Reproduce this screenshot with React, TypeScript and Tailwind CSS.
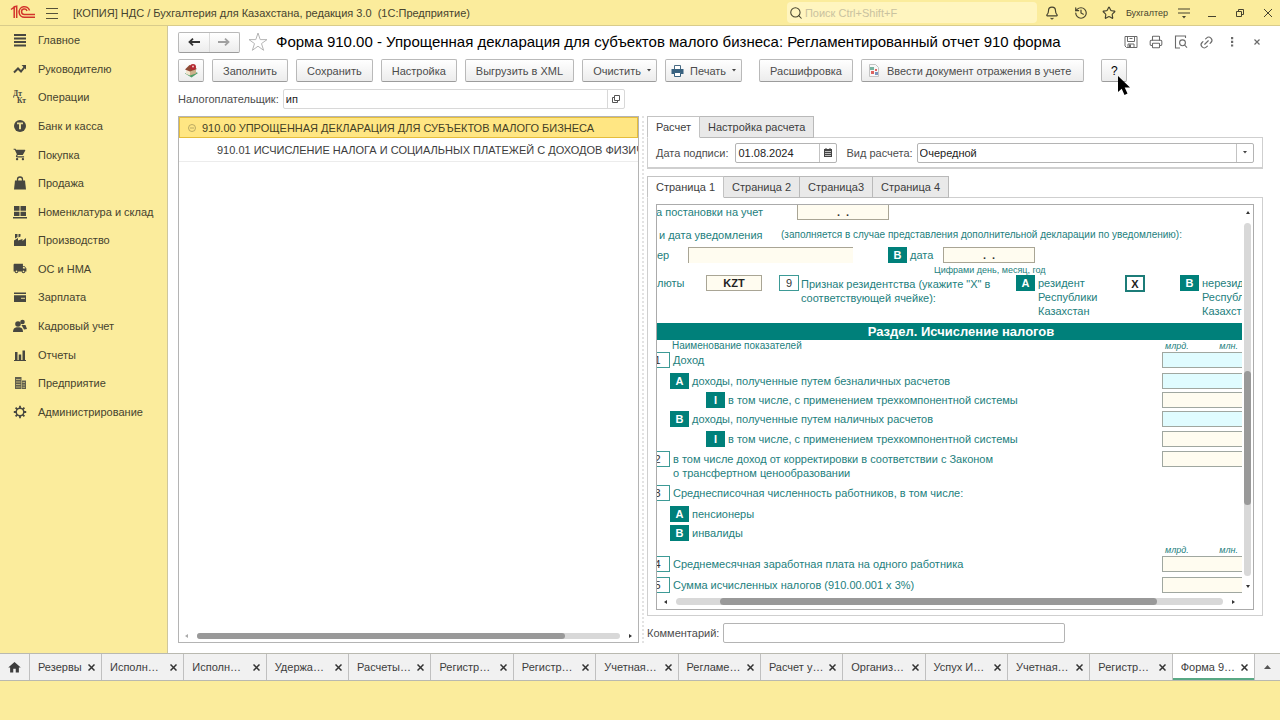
import React from 'react';
import { Bell, History, Star, Search, Printer, Link2 } from 'lucide-react';
import { MdShoppingCart, MdLocalShipping, MdHome } from 'react-icons/md';

const svgProps = { width: 14, height: 14, viewBox: '0 0 14 14', fill: 'currentColor' };

const MainIcon = () => (
  <svg {...svgProps}>
    <path d="M1 1h12v2H1zM1 4.5h12v2H1zM1 8h12v2H1zM1 11.5h12v2H1z" />
  </svg>
);

const TrendIcon = () => (
  <svg {...svgProps} fill="none" stroke="currentColor" strokeWidth="2">
    <path d="M1 10.5 5 6.5l3 3L12 4.5" />
    <path d="M8.5 3H13v4.5" fill="currentColor" stroke="none" />
  </svg>
);

const OperationsIcon = () => (
  <svg {...svgProps} fontFamily="Liberation Serif, serif" fontWeight="bold" fontSize="7.5">
    <text x="0" y="6">Дт</text>
    <text x="4" y="13">Кт</text>
  </svg>
);

const CoinIcon = () => (
  <svg {...svgProps}>
    <circle cx="7" cy="7" r="6" />
    <path d="M4 3.5h6v1.8H8v5H6v-5H4z" fill="#e9dc94" />
  </svg>
);

const BagIcon = () => (
  <svg {...svgProps}>
    <path d="M2 4.5h10l1 9H1z" />
    <path d="M4.5 6V3.5a2.5 2.5 0 0 1 5 0V6" fill="none" stroke="currentColor" strokeWidth="1.3" />
  </svg>
);

const StockIcon = () => (
  <svg {...svgProps}>
    <path d="M1 1h5.5v4.7H1zM7.5 1H13v4.7H7.5zM1 6.7h5.5V11H1zM7.5 6.7H13V11H7.5zM0 12h14v1.5H0z" />
  </svg>
);

const FactoryIcon = () => (
  <svg {...svgProps}>
    <path d="M1 13V7.5L5 5v2.5L9.5 6v2L13 5v8zM2 1h2.5v3L2 5.5zM5.5 1h2v2.5l-2 1z" />
  </svg>
);

const WalletIcon = () => (
  <svg {...svgProps}>
    <path d="M1 2.5h12V4H1zM1 5.3h12V12H1z" />
    <path d="M8 8.3h4" stroke="#e9dc94" strokeWidth="1" />
  </svg>
);

const PeopleIcon = () => (
  <svg {...svgProps}>
    <circle cx="9.5" cy="3" r="2.3" />
    <path d="M8.5 6h4l1.5 4-3 .5z" />
    <circle cx="5" cy="5" r="2.8" />
    <path d="M0 13c0-3 1.5-4.5 3.5-4.7h3C8.8 8.500 10 10 10 13z" />
  </svg>
);

const ChartIcon = () => (
  <svg {...svgProps}>
    <path d="M2 4h2.5v8H2zM5.7 6.5h2.5V12H5.7zM9.5 2.500H12V12H9.5zM1 12h12v1H1z" />
  </svg>
);

const BuildingIcon = () => (
  <svg {...svgProps} opacity=".85">
    <path d="M2 1h6.5v12H2zM9 4.5h4V13H9z" />
    <path d="M3 3.5h4.5M3 6h4.5M3 8.5h4.5M3 11h4.5M9.5 6.5H12M9.5 9H12M9.5 11.3H12" stroke="#c9bd7c" strokeWidth=".8" />
  </svg>
);

const GearIcon = () => (
  <svg {...svgProps} fill="none" stroke="currentColor">
    <circle cx="7" cy="7" r="3.8" strokeWidth="1.5" />
    <path d="M7 .8v2.4M7 10.800v2.4M.8 7h2.4M10.800 7h2.4M2.600 2.600l1.700 1.700M9.700 9.700l1.700 1.700M11.400 2.600 9.700 4.300M4.300 9.700l-1.700 1.700" strokeWidth="1.800" />
  </svg>
);

const sections = [
  { name: 'Главное', icon: <MainIcon /> },
  { name: 'Руководителю', icon: <TrendIcon /> },
  { name: 'Операции', icon: <OperationsIcon /> },
  { name: 'Банк и касса', icon: <CoinIcon /> },
  { name: 'Покупка', icon: <MdShoppingCart size={15} /> },
  { name: 'Продажа', icon: <BagIcon /> },
  { name: 'Номенклатура и склад', icon: <StockIcon /> },
  { name: 'Производство', icon: <FactoryIcon /> },
  { name: 'ОС и НМА', icon: <MdLocalShipping size={15} /> },
  { name: 'Зарплата', icon: <WalletIcon /> },
  { name: 'Кадровый учет', icon: <PeopleIcon /> },
  { name: 'Отчеты', icon: <ChartIcon /> },
  { name: 'Предприятие', icon: <BuildingIcon /> },
  { name: 'Администрирование', icon: <GearIcon /> },
];

const windows = [
  'Исполн…', 'Исполн…', 'Удержа…', 'Расчеты…', 'Регистр…', 'Регистр…', 'Учетная…',
  'Регламе…', 'Расчет у…', 'Организ…', 'Успух И…', 'Учетная…', 'Регистр…', 'Форма 9…',
];

function Logo() {
  return (
    <svg width="26" height="15" viewBox="0 0 26 15" fill="none" stroke="#d3342b" strokeWidth="1.5">
      <path d="M1 4.5 4.200 2.200V13M3.5 2 6.700 1.200V13" />
      <path d="M19.500 5.500A5.300 5.300 0 1 0 14.500 12.300H25" />
      <path d="M17 5.900A2.800 2.800 0 1 0 14.500 9.600H25" />
    </svg>
  );
}

function TitleBar() {
  return (
    <header className="flex h-[26px] items-center border-b border-[#d9cc8b] pl-2.5 text-[#46432f]">
      <Logo />
      <button aria-label="Меню" className="ml-2.5 flex">
        <svg width="12" height="12" viewBox="0 0 12 12" stroke="#55513a">
          <path d="M0 1.5h12M0 6.5h12M0 11.5h12" />
        </svg>
      </button>
      <span className="ml-[15px] whitespace-pre">[КОПИЯ] НДС / Бухгалтерия для Казахстана, редакция 3.0  (1С:Предприятие)</span>
      <label className="ml-auto flex h-[21px] w-[250px] items-center gap-0.5 rounded-sm bg-[#fff5bf] pl-0.5">
        <Search size={14} strokeWidth={1.8} />
        <input placeholder="Поиск Ctrl+Shift+F" className="min-w-0 flex-1 bg-transparent outline-none placeholder:text-[#c9c2a0]" />
      </label>
      <button aria-label="Уведомления" className="ml-2 flex w-[15px] justify-center"><Bell size={14} strokeWidth={2} /></button>
      <button aria-label="История" className="ml-3.5 flex"><History size={14} strokeWidth={2} /></button>
      <button aria-label="Избранное" className="ml-3.5 flex"><Star size={14} strokeWidth={2} /></button>
      <span className="ml-2.5 text-[9px]">Бухгалтер</span>
      <button aria-label="Настройки" className="ml-2.5 flex">
        <svg width="12" height="12" viewBox="0 0 12 12" stroke="#46432f" strokeWidth="1.2">
          <path d="M0 2h12M0 6h12" />
          <path d="M4 9h4l-2 2.500z" fill="#46432f" stroke="none" />
        </svg>
      </button>
      <button aria-label="Свернуть" className="ml-[18px] flex">
        <svg width="8" height="10" viewBox="0 0 8 10" stroke="#46432f"><path d="M0 8.500h8" /></svg>
      </button>
      <button aria-label="Развернуть" className="ml-5 flex">
        <svg width="8" height="8" viewBox="0 0 8 8" fill="none" stroke="#46432f">
          <path d="M.5 2.500h5v5h-5zM2.500 2.500v-2h5v5h-2" />
        </svg>
      </button>
      <button aria-label="Закрыть" className="ml-5 mr-2 flex">
        <svg width="8" height="8" viewBox="0 0 8 8" stroke="#46432f"><path d="M0 0l8 8M8 0 0 8" /></svg>
      </button>
    </header>
  );
}

function Sidebar() {
  return (
    <nav className="w-[168px] shrink-0 border-r border-[#cfc79c]">
      <ul className="grid h-[400px] auto-rows-fr">
        {sections.map((s) => (
          <li key={s.name} className="flex">
            <a href="#" className="flex flex-1 items-center gap-[11px] pl-[13px] text-[#46432f]">
              <span className="flex w-3.5 justify-center text-[#474740]">{s.icon}</span>
              {s.name}
            </a>
          </li>
        ))}
      </ul>
    </nav>
  );
}

function ToolButton({ children, className = 'px-2.5', ...rest }: React.ComponentProps<'button'>) {
  return (
    <button
      className={`flex h-[23px] items-center justify-center rounded-xs border border-[#b9b9b9] border-b-[#9c9c9c] bg-linear-to-b from-white to-[#ececec] whitespace-nowrap text-[#4c4c4c] ${className}`}
      {...rest}
    >
      {children}
    </button>
  );
}

const Caret = () => (
  <svg width="4" height="3" viewBox="0 0 4 3" fill="#444"><path d="M0 0h4L2 2.500z" /></svg>
);

function FormHeader() {
  return (
    <div className="flex h-5 items-center">
      <div className="flex h-[21px] w-[62px] rounded-xs border border-[#b9b9b9] border-b-[#9c9c9c] bg-linear-to-b from-white to-[#ececec]">
        <button aria-label="Назад" className="flex flex-1 items-center justify-center border-r border-[#dcdcdc]">
          <svg width="12" height="8" viewBox="0 0 12 8" fill="none" stroke="#333" strokeWidth="1.8"><path d="M12 4H1.500M5 .7 1.500 4 5 7.300" /></svg>
        </button>
        <button aria-label="Вперед" className="flex flex-1 items-center justify-center">
          <svg width="12" height="8" viewBox="0 0 12 8" fill="none" stroke="#a0a0a0" strokeWidth="1.8"><path d="M0 4h10.500M7 .7 10.500 4 7 7.300" /></svg>
        </button>
      </div>
      <button aria-label="В избранное" className="ml-2 flex">
        <svg width="20" height="20" viewBox="0 0 20 20" fill="none" stroke="#b5b5b5">
          <path d="m10 1 2.200 6.600H19l-5.500 4 2.100 6.700L10 14.200l-5.600 4.100 2.100-6.700L1 7.600h6.800z" />
        </svg>
      </button>
      <h1 className="ml-2 text-[15px] leading-5 whitespace-nowrap text-black">
        Форма 910.00 - Упрощенная декларация для субъектов малого бизнеса: Регламентированный отчет 910 форма
      </h1>
      <div className="-mr-px ml-auto flex items-center gap-[11px] text-[#6a6a6a]">
        <button aria-label="Сохранить" className="flex">
          <svg width="14" height="14" viewBox="0 0 14 14" fill="none" stroke="currentColor">
            <path d="M1 1.500h12v11H2.500L1 11z" />
            <path d="M3.500 1.500v5h7v-5M5.500 3.500h3M4 12.500v-3.500h6v3.500" />
            <path d="M5 9.500h2v3H5z" fill="currentColor" stroke="none" />
          </svg>
        </button>
        <button aria-label="Печать" className="flex"><Printer size={14} strokeWidth={1.8} /></button>
        <button aria-label="Просмотр" className="flex">
          <svg width="14" height="14" viewBox="0 0 14 14" fill="none" stroke="currentColor" strokeWidth="1.100">
            <path d="M6 13H1.500V1h10v2" />
            <circle cx="8.500" cy="7.800" r="2.900" />
            <path d="m10.600 10 2.400 2.700" />
          </svg>
        </button>
        <button aria-label="Ссылка" className="flex"><Link2 size={15} strokeWidth={1.8} className="-rotate-45" /></button>
        <button aria-label="Еще" className="flex w-3.5 justify-center">
          <svg width="3" height="10" viewBox="0 0 3 10" fill="currentColor"><path d="M0 0h2.200v2.200H0zM0 3.700h2.200v2.200H0zM0 7.400h2.200v2.200H0z" /></svg>
        </button>
        <button aria-label="Закрыть форму" className="flex w-3.5 justify-center">
          <svg width="6" height="6" viewBox="0 0 6 6" stroke="currentColor" strokeWidth="1.200"><path d="M.5.500l5 5M5.500.500l-5 5" /></svg>
        </button>
      </div>
    </div>
  );
}

function Toolbar() {
  return (
    <div className="mt-[7px] flex gap-2">
      <ToolButton className="w-[26px]" aria-label="Обновить">
        <svg width="15" height="15" viewBox="0 0 15 15">
          <path d="m1 10.500 6-3 7 2.500-6.500 4.500z" fill="#4f9d68" />
          <path d="M2 6.500 6 8v4.500L2 11z" fill="#f1e5cf" />
          <path d="m6 8 6-2v4.500L6 12.500z" fill="#cdb28d" />
          <path d="M1 6.500 5.500 2l3 1L13 6 6 8.500z" fill="#8f4a35" />
          <circle cx="9" cy="4" r="3" fill="#b52a33" />
          <circle cx="9" cy="3.600" r="1" fill="#f0c8c4" />
        </svg>
      </ToolButton>
      <ToolButton>Заполнить</ToolButton>
      <ToolButton>Сохранить</ToolButton>
      <ToolButton>Настройка</ToolButton>
      <ToolButton>Выгрузить в XML</ToolButton>
      <ToolButton className="gap-1.5 pr-[5px] pl-2.5">Очистить <Caret /></ToolButton>
      <ToolButton className="gap-1.5 px-[5px]">
        <svg width="13" height="12" viewBox="0 0 13 12">
          <path d="M3.500.500h6v4h-6z" fill="#fff" stroke="#496a83" />
          <path d="M.5 4h12v5h-12z" fill="#38617f" />
          <path d="M3.500 7.500h6v4h-6z" fill="#fff" stroke="#38617f" />
        </svg>
        Печать <Caret />
      </ToolButton>
      <ToolButton className="ml-[9px] px-2.5">Расшифровка</ToolButton>
      <ToolButton className="gap-2 pr-3 pl-[7px]">
        <svg width="10" height="13" viewBox="0 0 10 13">
          <path d="M.5.500h6l3 3v9h-9z" fill="#f8f8f8" stroke="#c3c3c3" />
          <path d="M1 3h4v3H1z" fill="#78b3a0" />
          <path d="M2 7h3v3H2zM6 5h2v2H6z" fill="#dc6260" />
          <path d="M6 8h3v3H6z" fill="#7b94bd" />
        </svg>
        Ввести документ отражения в учете
      </ToolButton>
      <div className="relative ml-[9px]">
        <ToolButton className="w-[26px] border-[#8e8e8e] text-xs text-black">?</ToolButton>
        <svg className="absolute top-[17px] left-[17px]" width="13" height="20" viewBox="0 0 13 20">
          <path d="M0 0v16l3.700-3.300L6.500 19l3-1.400L6.700 11.500H12z" fill="#000" />
        </svg>
      </div>
    </div>
  );
}

function ReportTree() {
  return (
    <div className="flex flex-col overflow-hidden border border-[#b4b4b4] text-[#3d3d3d]">
      <ul>
        <li className="flex h-[21px] items-center gap-1.5 border border-[#e5bd3b] bg-[#ffe683] pl-2 whitespace-nowrap text-[#443f25]">
          <svg width="8" height="8" viewBox="0 0 8 8" fill="none" stroke="#a89a5a" strokeWidth=".8">
            <circle cx="4" cy="4" r="3.500" />
            <path d="M2 4h4" />
          </svg>
          910.00 УПРОЩЕННАЯ ДЕКЛАРАЦИЯ ДЛЯ СУБЪЕКТОВ МАЛОГО БИЗНЕСА
        </li>
        <li className="flex h-6 items-center border-b border-[#ececec] pl-[38px] whitespace-nowrap">
          910.01 ИСЧИСЛЕНИЕ НАЛОГА И СОЦИАЛЬНЫХ ПЛАТЕЖЕЙ С ДОХОДОВ ФИЗИЧ
        </li>
      </ul>
      <div className="mt-auto flex h-3 items-center gap-2 px-1.5">
        <svg width="4" height="4" viewBox="0 0 4 4" fill="#aaa"><path d="M3 0v4L0 2z" /></svg>
        <div className="h-1.5 flex-1 rounded-full bg-[#d8d8d8]">
          <div className="h-1.5 w-[87%] rounded-full bg-[#999]" />
        </div>
        <svg width="4" height="4" viewBox="0 0 4 4" fill="#333"><path d="M1 0v4l3-2z" /></svg>
      </div>
    </div>
  );
}

function Tabs({ names }: { names: string[] }) {
  return (
    <div role="tablist" className="relative z-10 -mb-px flex">
      {names.map((name, i) => (
        <button
          key={name}
          role="tab"
          aria-selected={i === 0}
          className={
            i === 0
              ? 'h-[22px] border border-[#c3c3c3] border-b-white bg-white px-2 text-[#3d3d3d]'
              : 'h-[22px] border border-l-0 border-[#b9b9b9] bg-[#e9e9e9] px-2 text-[#3d3d3d]'
          }
        >
          {name}
        </button>
      ))}
    </div>
  );
}

const Letter = ({ children }: { children: string }) => (
  <span className="flex h-4 w-[19px] shrink-0 items-center justify-center bg-[#00807a] font-bold text-white">{children}</span>
);

// scrolled half out of view on the left
const RowNumber = ({ n }: { n: string }) => (
  <span className="-ml-3 flex h-4 w-[25px] shrink-0 items-center justify-center border border-[#3d9a96] text-[#333]">{n}</span>
);

const Units = () => (
  <span className="ml-auto flex w-20 justify-between pr-1 pl-[3px] text-[9px] italic">
    <span>млрд.</span>
    <span>млн.</span>
  </span>
);

const cream = 'bg-[#fffcf0]';
const cyan = 'bg-[#e0fcff]';

const indicators = [
  { mark: <RowNumber n="1" />, text: 'Доход', fill: cyan, indent: 'pl-0' },
  { mark: <Letter>A</Letter>, text: 'доходы, полученные путем безналичных расчетов', fill: cyan, indent: 'mt-[5px] pl-[13px]' },
  { mark: <Letter>I</Letter>, text: 'в том числе, с применением трехкомпонентной системы', fill: cream, indent: 'mt-[3px] pl-[49px]' },
  { mark: <Letter>B</Letter>, text: 'доходы, полученные путем наличных расчетов', fill: cyan, indent: 'mt-[3px] pl-[13px]' },
  { mark: <Letter>I</Letter>, text: 'в том числе, с применением трехкомпонентной системы', fill: cream, indent: 'mt-[4px] pl-[49px]' },
  { mark: <RowNumber n="2" />, text: 'в том числе доход от корректировки в соответствии с Законом\nо трансфертном ценообразовании', fill: cream, indent: 'mt-[4px] pl-0' },
  { mark: <RowNumber n="3" />, text: 'Среднесписочная численность работников, в том числе:', indent: 'mt-[5px] pl-0' },
  { mark: <Letter>A</Letter>, text: 'пенсионеры', indent: 'mt-[5px] pl-[13px]' },
  { mark: <Letter>B</Letter>, text: 'инвалиды', indent: 'mt-[3px] pl-[13px]' },
  { mark: <RowNumber n="4" />, text: 'Среднемесячная заработная плата на одного работника', fill: cream, indent: 'pl-0', units: true },
  { mark: <RowNumber n="5" />, text: 'Сумма исчисленных налогов (910.00.001 x 3%)', fill: cream, indent: 'mt-[5px] pl-0' },
];

function Sheet() {
  return (
    <div className="min-w-0 flex-1 overflow-hidden text-[#23807d]">
      <div className="flex h-[15px] leading-[14px]">
        <span className="-ml-px w-[141px] shrink-0 whitespace-nowrap">а постановки на учет</span>
        <input aria-label="Дата постановки на учет" defaultValue=".  ." className="w-[92px] border border-t-0 border-[#a9a595] bg-[#fffcf0] text-center font-bold whitespace-pre text-[#333]" />
      </div>
      <div className="mt-[7px] flex h-4 items-center whitespace-nowrap">
        <span className="w-[124px] shrink-0 pl-0.5">и дата уведомления</span>
        <span className="text-[10px]">(заполняется в случае представления дополнительной декларации по уведомлению):</span>
      </div>
      <div className="mt-1 flex h-4 items-center">
        <span className="w-[31px]">ер</span>
        <input aria-label="номер" className="h-4 w-[165px] border-t border-l border-[#a9a595] bg-[#fffcf0]" />
        <span className="ml-[35px] flex w-[55px] items-center gap-[3px]"><Letter>B</Letter> дата</span>
        <input aria-label="дата" defaultValue=".  ." className="h-4 w-[92px] border border-[#a9a595] bg-[#fffcf0] text-center font-bold whitespace-pre text-[#333]" />
      </div>
      <p className="mt-px h-3 pl-[277px] text-[9px] leading-3 whitespace-nowrap">Цифрами день, месяц, год</p>
      <div className="-mt-px flex h-12 items-start leading-[14px] whitespace-nowrap">
        <span className="w-[49px] shrink-0 pt-px">люты</span>
        <input aria-label="Код валюты" defaultValue="KZT" className="h-4 w-[56px] shrink-0 border border-[#a9a595] bg-[#fffcf0] text-center font-bold text-[#222]" />
        <span className="ml-[17px] flex h-4 w-5 shrink-0 items-center justify-center border border-[#3d9a96] text-[#333]">9</span>
        <span className="w-[217px] shrink-0 pt-0.5 pl-0.5">Признак резидентства (укажите "X" в<br />соответствующей ячейке):</span>
        <Letter>A</Letter>
        <span className="w-[90px] shrink-0 pt-px pl-[3px]">резидент<br />Республики<br />Казахстан</span>
        <input aria-label="резидент" defaultValue="X" className="h-[17px] w-5 shrink-0 border-2 border-[#1c7c78] bg-white text-center font-bold text-[#222]" />
        <span className="ml-[35px] flex"><Letter>B</Letter></span>
        <span className="pt-px pl-[3px]">нерезид<br />Республ<br />Казахст</span>
      </div>
      <h2 className="h-[17px] bg-[#00807a] pl-[23px] text-center text-[13px] leading-[17px] font-bold text-white">Раздел. Исчисление налогов</h2>
      <div className="flex h-3 items-center pl-[15px]">
        <span className="text-[10px]">Наименование показателей</span>
        <Units />
      </div>
      {indicators.map((row, i) => (
        <React.Fragment key={i}>
          {row.units && <div className="mt-[3px] flex h-3 items-center"><Units /></div>}
          <div className={`flex items-start ${row.indent}`}>
            {row.mark}
            <span className="pt-px pl-[3px] leading-[14px] whitespace-pre-line">{row.text}</span>
            {row.fill && <input aria-label={row.text} className={`ml-auto h-4 w-20 shrink-0 border border-r-0 border-[#a0a7a0] ${row.fill}`} />}
          </div>
        </React.Fragment>
      ))}
    </div>
  );
}

function SheetFrame() {
  return (
    <div className="flex flex-1 flex-col border border-[#ababab]">
      <div className="flex flex-1">
        <Sheet />
        <div className="flex w-[11px] shrink-0 flex-col items-center gap-2 py-1.5">
          <svg width="4" height="4" viewBox="0 0 4 4" fill="#333"><path d="M0 3h4L2 0z" /></svg>
          <div className="flex w-[7px] flex-1 flex-col rounded-full bg-[#d8d8d8]">
            <div className="grow-[42]" />
            <div className="grow-[38] rounded-full bg-[#999]" />
            <div className="grow-[20]" />
          </div>
          <svg width="4" height="4" viewBox="0 0 4 4" fill="#333"><path d="M0 1h4L2 4z" /></svg>
        </div>
      </div>
      <div className="flex h-[15px] items-center gap-2 pr-[18px] pl-[7px]">
        <svg width="4" height="4" viewBox="0 0 4 4" fill="#333"><path d="M3 0v4L0 2z" /></svg>
        <div className="h-[7px] flex-1 rounded-full bg-[#d8d8d8]">
          <div className="ml-[8%] h-[7px] w-4/5 rounded-full bg-[#999]" />
        </div>
        <svg width="4" height="4" viewBox="0 0 4 4" fill="#333"><path d="M1 0v4l3-2z" /></svg>
      </div>
    </div>
  );
}

function ReportPanel() {
  return (
    <div className="flex min-w-0 flex-col text-[#4c4c4c]">
      <Tabs names={['Расчет', 'Настройка расчета']} />
      <div className="flex h-8 items-center border border-b-2 border-[#cfcfcf] px-2">
        <label htmlFor="sign-date">Дата подписи:</label>
        <div className="ml-[7px] flex h-5 w-[102px] rounded-xs border border-[#b4b4b4]">
          <input id="sign-date" defaultValue="01.08.2024" className="w-0 flex-1 pl-0.5 text-[#222] outline-none" />
          <button aria-label="Календарь" className="flex w-[17px] items-center justify-center border-l border-[#c3c3c3]">
            <svg width="8" height="9" viewBox="0 0 8 9">
              <path d="M0 1h8v8H0zM1.500 0h1v1h-1zM5.500 0h1v1h-1z" fill="#444" />
              <path d="M1 3.500h6M1 5.500h6M1 7.500h6" stroke="#ddd" strokeWidth=".8" />
            </svg>
          </button>
        </div>
        <label htmlFor="calc-kind" className="ml-[9px]">Вид расчета:</label>
        <div className="ml-1 flex h-5 flex-1 rounded-xs border border-[#b4b4b4]">
          <select id="calc-kind" className="flex-1 appearance-none pl-0.5 text-[#222] outline-none">
            <option>Очередной</option>
          </select>
          <span className="flex w-[17px] items-center justify-center border-l border-[#c3c3c3]"><Caret /></span>
        </div>
      </div>
      <div className="mt-[7px] flex flex-1 flex-col">
        <Tabs names={['Страница 1', 'Страница 2', 'Страница3', 'Страница 4']} />
        <div className="flex flex-1 flex-col border border-[#cfcfcf] px-2 pt-1.5 pb-[5px]">
          <SheetFrame />
        </div>
      </div>
      <div className="mt-[7px] flex h-5 items-center gap-1">
        <label htmlFor="comment">Комментарий:</label>
        <input id="comment" className="h-5 w-[342px] rounded-xs border border-[#b4b4b4] px-1" />
      </div>
    </div>
  );
}

function WindowTab({ name, active }: { name: string; active?: boolean }) {
  return (
    <div className={`flex min-w-0 flex-1 items-center justify-between border-r border-[#c0c0c0] pr-1.5 pl-2 ${active ? 'bg-white shadow-[inset_0_-2px_#58a884]' : ''}`}>
      <button className="whitespace-nowrap">{name}</button>
      <button aria-label="Закрыть окно" className="flex">
        <svg width="7" height="7" viewBox="0 0 7 7" stroke="#333" strokeWidth="1.500"><path d="m.5.500 6 6M6.500.500l-6 6" /></svg>
      </button>
    </div>
  );
}

function WindowBar() {
  return (
    <footer className="mb-[39px] flex h-7 border-y border-[#b9b9b0] bg-[#f1f1f1] text-[#3d3d3d]">
      <button aria-label="Начальная страница" className="flex w-[30px] items-center justify-center border-r border-[#c0c0c0]">
        <MdHome size={15} />
      </button>
      <div className="flex w-[72px]"><WindowTab name="Резервы" /></div>
      {windows.map((name, i) => (
        <WindowTab key={i} name={name} active={i === windows.length - 1} />
      ))}
      <button aria-label="Все окна" className="flex w-[25px] items-center justify-center">
        <svg width="7" height="4" viewBox="0 0 7 4" fill="#555"><path d="M0 4h7L3.500 0z" /></svg>
      </button>
    </footer>
  );
}

export default function App() {
  return (
    <div className="flex min-h-screen flex-col bg-[#fbec9c] font-['Liberation_Sans',Arial,sans-serif] text-[11px] leading-4">
      <TitleBar />
      <div className="flex flex-1">
        <Sidebar />
        <main className="flex min-w-0 flex-1 flex-col bg-white pt-1.5 pr-[17px] pb-2.5 pl-2.5">
          <FormHeader />
          <Toolbar />
          <div className="mt-[7px] flex h-5 items-center text-[#4c4c4c]">
            <label htmlFor="payer">Налогоплательщик:</label>
            <div className="ml-1 flex h-5 w-[342px] rounded-xs border border-[#d8d8d8]">
              <input id="payer" defaultValue="ип" className="w-0 flex-1 pl-0.5 text-[#222] outline-none" />
              <button aria-label="Открыть" className="flex w-[17px] items-center justify-center border-l border-[#d8d8d8]">
                <svg width="8" height="8" viewBox="0 0 8 8" fill="none" stroke="#555">
                  <path d="M2.500.500h5v5h-5zM2.500 2.500h-2v5h5v-2" />
                </svg>
              </button>
            </div>
          </div>
          <div className="mt-[7px] grid flex-1 grid-cols-[minmax(0,461fr)_8px_minmax(0,616fr)]">
            <ReportTree />
            <div className="mx-auto border-l-2 border-dotted border-[#e3e3e3]" />
            <ReportPanel />
          </div>
        </main>
      </div>
      <WindowBar />
    </div>
  );
}
